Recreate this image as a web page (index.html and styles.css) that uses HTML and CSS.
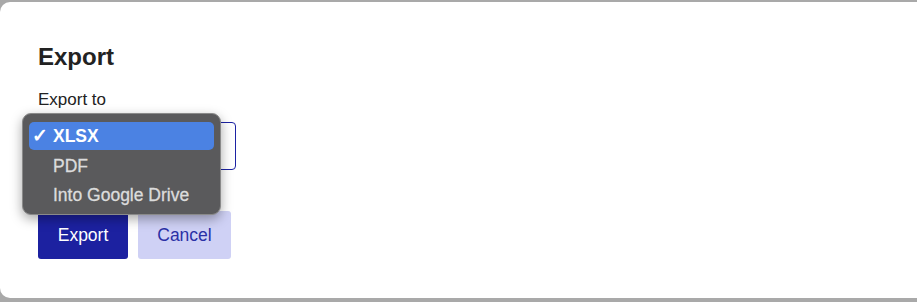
FILE: index.html
```html
<!DOCTYPE html>
<html>
<head>
  <title>Export</title>
  <link rel="stylesheet" href="styles.css">
</head>
<body>

  <div class="dialog">
    <h2>Export</h2>
    <label class="label">Export to</label>

    <div class="field">
      <div class="select"></div>

      <!-- open select menu -->
      <div class="menu">
        <div class="option selected"><span class="check">✓</span>XLSX</div>
        <div class="option">PDF</div>
        <div class="option">Into Google Drive</div>
      </div>
    </div>

    <div class="actions">
      <button class="btn primary">Export</button>
      <button class="btn secondary">Cancel</button>
    </div>
  </div>

</body>
</html>
```

FILE: styles.css
```css
body {
  margin: 0;
  background: #a9a9a9;
  font-family: "Liberation Sans", Arial, sans-serif;
  height: 302px;
  overflow: hidden;
}

.dialog {
  margin-top: 2px;
  height: 296px;
  background: white;
  border-radius: 10px 0 0 10px;
  padding: 40px 0 0 38px;
  box-sizing: border-box;
}

h2 {
  margin: 0;
  font-size: 24px;
  line-height: 29px;
  font-weight: bold;
  color: #222;
}

.label {
  display: block;
  margin-top: 19px;
  font-size: 17px;
  line-height: 20px;
  color: #222;
}

.field {
  position: relative;
  margin-top: 12px;
  width: 198px;
}

.select {
  height: 48px;
  border: 1px solid #1c22a3;
  border-radius: 4px;
  box-sizing: border-box;
}

.menu {
  position: absolute;
  top: -9px;
  left: -16px;
  width: 199px;
  height: 102px;
  box-sizing: border-box;
  padding: 8px 6px;
  background: #5a5a5c;
  border: 1px solid #8a8a8a;
  border-radius: 9px;
  box-shadow: 0 4px 12px rgba(0, 0, 0, 0.35);
}

.option {
  height: 29px;
  line-height: 28px;
  padding-left: 24px;
  font-size: 17.5px;
  color: #dcdcdc;
  border-radius: 5px;
  -webkit-text-stroke: 0.3px #dcdcdc;
}

.option.selected {
  position: relative;
  height: 28px;
  margin-bottom: 2px;
  background: #4b82e3;
  color: white;
  font-weight: bold;
  -webkit-text-stroke: 0;
}

.check {
  position: absolute;
  left: 3px;
  font-size: 19px;
}

.actions {
  display: flex;
  gap: 10px;
  margin-top: 41px;
}

.btn {
  height: 48px;
  border: none;
  border-radius: 3px;
  font-family: inherit;
  font-size: 17.5px;
  padding: 0;
  cursor: pointer;
}

.primary {
  width: 90px;
  background: #1c21a0;
  color: white;
}

.secondary {
  width: 93px;
  background: #cfd1f5;
  color: #2a30a6;
}
```
